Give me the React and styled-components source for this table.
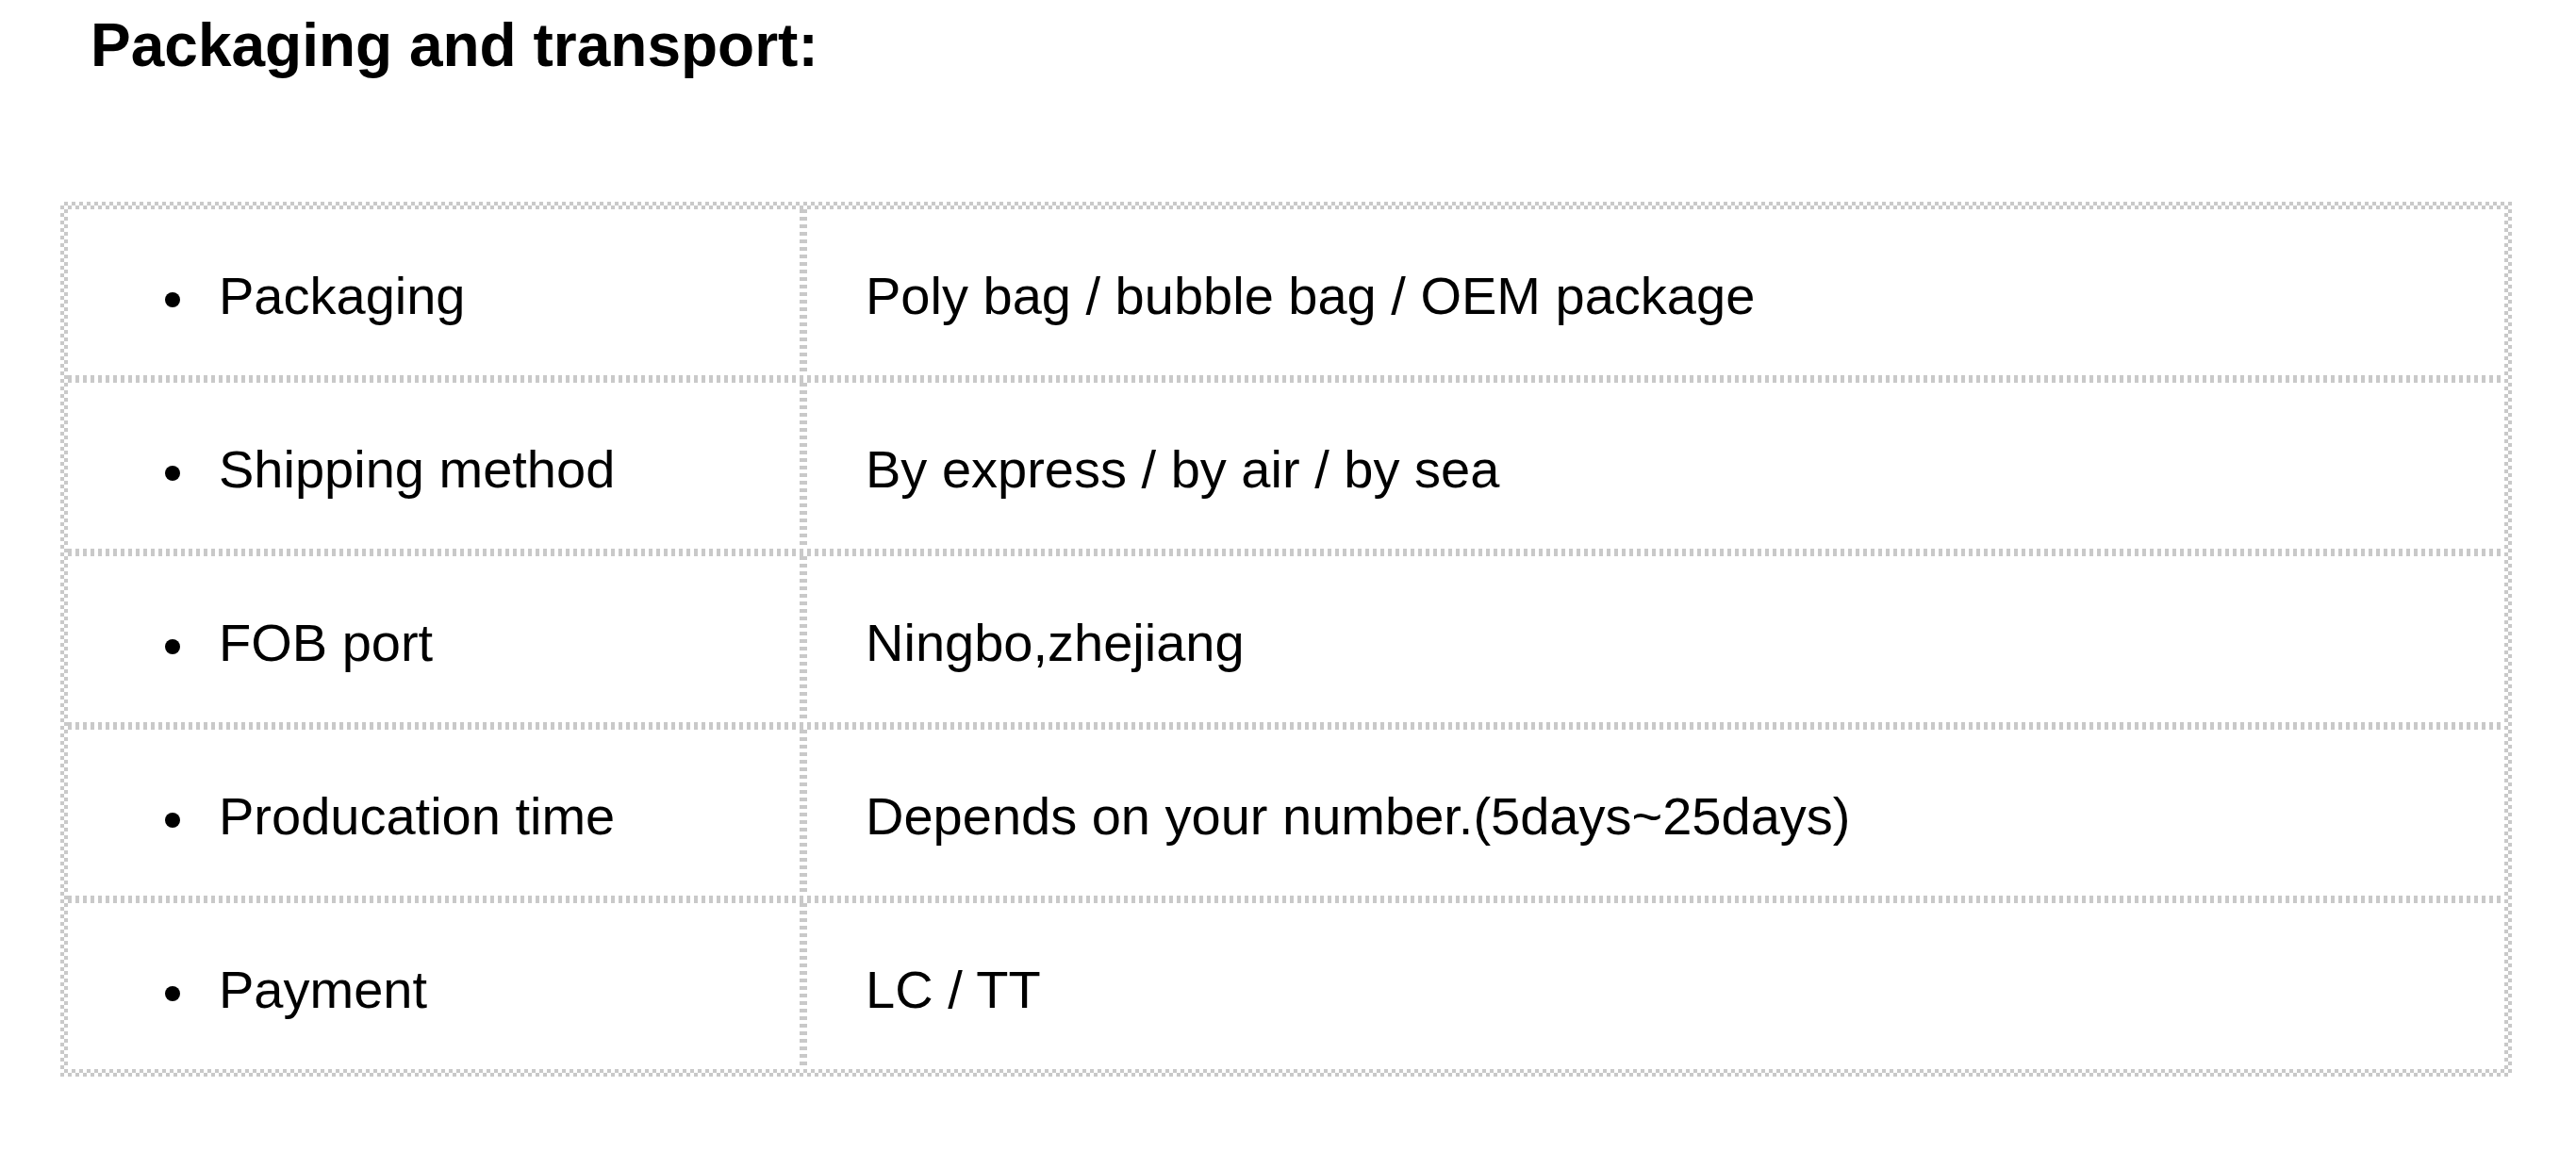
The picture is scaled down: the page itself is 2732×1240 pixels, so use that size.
import React from 'react';
import styled, { createGlobalStyle } from 'styled-components';

const GlobalStyle = createGlobalStyle`
    html, body {
        margin: 0;
        padding: 0;
        background: #fff;
    }
    body {
        font-family: "Liberation Sans", Arial, Helvetica, sans-serif;
        color: #000;
    }
`;

const BORDER = '#c9c9c9';

const Page = styled.div`
    padding: 16px 0 98px 64px;
`;

const Title = styled.h2`
    margin: 0 0 134px 32px;
    font-size: 64px;
    line-height: 1;
    font-weight: 700;
`;

// dotted outer frame, drawn as a small checkerboard
const Frame = styled.div`
    width: 2600px;
    box-sizing: border-box;
    padding: 8px;
    background: conic-gradient(${BORDER} 25%, #fff 0 50%, ${BORDER} 0 75%, #fff 0) 0 0 / 8px 8px;
`;

const Table = styled.ul`
    margin: 0;
    padding: 0;
    list-style: none;
    background: #fff;
`;

const Row = styled.li`
    display: grid;
    grid-template-columns: 784px 1fr;
    box-sizing: border-box;
    height: ${p => (p.$last ? 176 : 184)}px;
    padding-bottom: ${p => (p.$last ? 0 : 8)}px;
    background: ${p => (p.$last
        ? 'none'
        : `linear-gradient(90deg, ${BORDER} 4px, transparent 0) 0 100% / 8px 8px repeat-x`)};
`;

const Label = styled.div`
    display: flex;
    align-items: center;
    box-sizing: border-box;
    padding: 7px 8px 0 103px;
    font-size: 56px;
    line-height: 1;
    background: linear-gradient(${BORDER} 4px, transparent 0) 100% 0 / 8px 8px repeat-y;
`;

const Bullet = styled.span`
    flex: none;
    width: 16px;
    height: 16px;
    margin: 8px 41px 0 0;
    border-radius: 50%;
    background: #000;
`;

const Value = styled.div`
    display: flex;
    align-items: center;
    padding: 7px 0 0 62px;
    font-size: 56px;
    line-height: 1;
`;

const rows = [
    ['Packaging', 'Poly bag / bubble bag / OEM package'],
    ['Shipping method', 'By express / by air / by sea'],
    ['FOB port', 'Ningbo,zhejiang'],
    ['Producation time', 'Depends on your number.(5days~25days)'],
    ['Payment', 'LC / TT'],
];

const App = () => {
    return (
        <Page>
            <GlobalStyle />
            <Title>Packaging and transport:</Title>
            <Frame>
                <Table>
                    {rows.map(([label, value], i) => (
                        <Row key={label} $last={i === rows.length - 1}>
                            <Label>
                                <Bullet />
                                {label}
                            </Label>
                            <Value>{value}</Value>
                        </Row>
                    ))}
                </Table>
            </Frame>
        </Page>
    );
};

export default App;
